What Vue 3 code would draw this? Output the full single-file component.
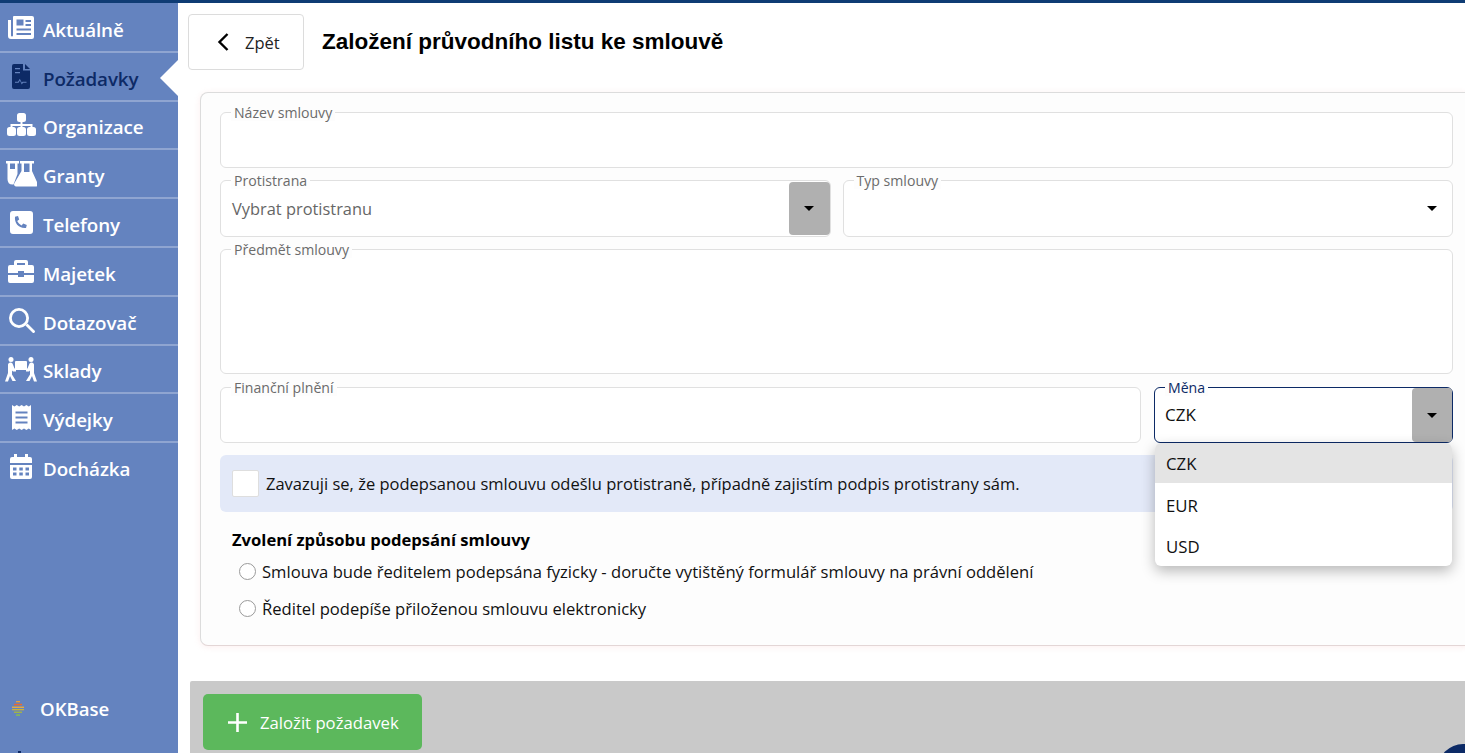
<template>
  <div class="page">
    <div class="top-line"></div>
    <div class="layout">
      <aside class="sidebar">
        <nav class="nav">
          <a
            v-for="item in navItems"
            :key="item.label"
            class="nav-item"
            :class="{ active: item.active }"
          >
            <svg class="nav-icon" viewBox="0 0 32 26" width="32" height="26">
              <path v-for="(d, i) in item.paths" :key="i" :d="d" fill-rule="evenodd" />
            </svg>
            <span class="nav-label">{{ item.label }}</span>
          </a>
        </nav>
        <div class="brand">
          <svg class="brand-logo" viewBox="0 0 14 15" width="14" height="15">
            <rect x="5" y="0" width="4" height="1.3" fill="#f0a030" />
            <rect x="3" y="2.8" width="8" height="1.5" fill="#ee6a2c" />
            <rect x="1" y="5.6" width="12" height="1.3" fill="#f2b134" />
            <rect x="1" y="8" width="12" height="1.3" fill="#c9b23a" />
            <rect x="3" y="10.600" width="8" height="1.3" fill="#a8b83c" />
            <rect x="5" y="13.400" width="4" height="1.3" fill="#8cc63f" />
          </svg>
          <span>OKBase</span>
        </div>
        <i class="peek"></i>
      </aside>

      <main class="content">
        <header class="head">
          <button class="back-btn">
            <svg viewBox="0 0 12 18" width="12" height="18">
              <path d="M10.500 1 2.500 9l8 8" fill="none" stroke="#000" stroke-width="2.400" />
            </svg>
            <span>Zpět</span>
          </button>
          <h1>Založení průvodního listu ke smlouvě</h1>
        </header>

        <section class="card">
          <div class="field">
            <label>Název smlouvy</label>
          </div>

          <div class="row row-half">
            <div class="field">
              <label>Protistrana</label>
              <span class="placeholder">Vybrat protistranu</span>
              <span class="caret-btn"><i class="caret"></i></span>
            </div>
            <div class="field">
              <label>Typ smlouvy</label>
              <span class="caret-plain"><i class="caret"></i></span>
            </div>
          </div>

          <div class="field field-tall">
            <label>Předmět smlouvy</label>
          </div>

          <div class="row row-money">
            <div class="field">
              <label>Finanční plnění</label>
            </div>
            <div class="field field-open">
              <label>Měna</label>
              <span class="value">CZK</span>
              <span class="caret-btn"><i class="caret"></i></span>
              <ul class="menu">
                <li
                  v-for="c in currencies"
                  :key="c"
                  :class="{ selected: c === currency }"
                >{{ c }}</li>
              </ul>
            </div>
          </div>

          <div class="notice">
            <span class="check"></span>
            <span>Zavazuji se, že podepsanou smlouvu odešlu protistraně, případně zajistím podpis protistrany sám.</span>
          </div>

          <h2>Zvolení způsobu podepsání smlouvy</h2>
          <div class="radio-row" v-for="r in signOptions" :key="r">
            <span class="radio"></span>
            <span>{{ r }}</span>
          </div>
        </section>

        <footer class="actions">
          <button class="create-btn">
            <svg viewBox="0 0 19 19" width="19" height="19">
              <path d="M8.200 0h2.600v8.200H19v2.600h-8.200V19H8.200v-8.200H0V8.200h8.200z" fill="#fff" />
            </svg>
            <span>Založit požadavek</span>
          </button>
        </footer>
        <div class="fab"></div>
      </main>
    </div>
  </div>
</template>

<script setup>
const currency = 'CZK'
const currencies = ['CZK', 'EUR', 'USD']
const signOptions = [
  'Smlouva bude ředitelem podepsána fyzicky - doručte vytištěný formulář smlouvy na právní oddělení',
  'Ředitel podepíše přiloženou smlouvu elektronicky'
]

const navItems = [
  {
    label: 'Aktuálně',
    paths: [
      'M9 2h18a2 2 0 0 1 2 2v19a2 2 0 0 1-2 2H6a3 3 0 0 1-3-3V6h3v15.500a1 1 0 0 0 2 0V3a1 1 0 0 1 1-1zM11.500 5.500v6h7v-6zM20.500 6v2h5.500V6zM20.500 10v2h5.500v-2zM11.500 14.500v2h14.500v-2zM11.500 19v2h14.500v-2z'
    ]
  },
  {
    label: 'Požadavky',
    active: true,
    paths: [
      'M9 1h9v6.500h7V24a2 2 0 0 1-2 2H9a2 2 0 0 1-2-2V3a2 2 0 0 1 2-2zM10 5v1.200h5V5zM10 9v1.200h5V9zM10 18.800v.9h3.600l1.300-2.100 1.900 3.800 1.200-1.700h3.500v-.9h-4l-.7.900-2-4-1.800 3.100z',
      'M20 1l5 5h-5z'
    ]
  },
  {
    label: 'Organizace',
    paths: [
      'M14.500 1h4a2.500 2.500 0 0 1 2.500 2.500v4a2.500 2.500 0 0 1-2.500 2.500h-4A2.500 2.500 0 0 1 12 7.500v-4A2.500 2.500 0 0 1 14.500 1z',
      'M15.500 10h2v2h10v3h-2v-1h-8v1h-2v-1h-8v1h-2v-3h10z',
      'M4.500 15h4a2.500 2.500 0 0 1 2.500 2.500v4A2.500 2.500 0 0 1 8.500 24h-4A2.500 2.500 0 0 1 2 21.500v-4A2.500 2.500 0 0 1 4.500 15z',
      'M14.500 15h4a2.500 2.500 0 0 1 2.500 2.500v4a2.500 2.500 0 0 1-2.500 2.500h-4a2.500 2.500 0 0 1-2.500-2.500v-4a2.500 2.500 0 0 1 2.500-2.500z',
      'M24.500 15h4a2.500 2.500 0 0 1 2.500 2.500v4a2.500 2.500 0 0 1-2.500 2.500h-4a2.500 2.500 0 0 1-2.500-2.500v-4a2.500 2.500 0 0 1 2.500-2.500z'
    ]
  },
  {
    label: 'Granty',
    paths: [
      'M1 0h13v2.500h-1.500V13l-4 10.500Q2.500 24 2.500 18V2.500H1zM5 2.500V8h5V2.500z',
      'M15 0h14v2.500h-2V10l5.500 12a2.200 2.200 0 0 1-2 3.500H11.500a2.200 2.200 0 0 1-2-3.500L16.500 10V2.500H15zM19 2.500V11h5.500V2.500z'
    ]
  },
  {
    label: 'Telefony',
    paths: [
      'M8 1h17a3 3 0 0 1 3 3v17a3 3 0 0 1-3 3H8a3 3 0 0 1-3-3V4a3 3 0 0 1 3-3zM13 6l-3 .8c-.8 6.500 4 12 11 11.200l.8-3-3.600-1.500-1.600 2c-2-1-3.500-2.500-4.400-4.400l2-1.600z'
    ]
  },
  {
    label: 'Majetek',
    paths: [
      'M11 2h10a2 2 0 0 1 2 2v3h4a2 2 0 0 1 2 2v6H19v-2h-6v2H3V9a2 2 0 0 1 2-2h4V4a2 2 0 0 1 2-2zM12 5v2h8V5z',
      'M3 17h10v2h6v-2h10v6a2 2 0 0 1-2 2H5a2 2 0 0 1-2-2z'
    ]
  },
  {
    label: 'Dotazovač',
    paths: [
      'M14 1a10 10 0 1 1 0 20a10 10 0 0 1 0-20zM14 3.800a7.200 7.200 0 1 0 0 14.400a7.200 7.200 0 0 0 0-14.400z',
      'M20.500 18.500l2-2 7 7a1.400 1.400 0 0 1-2 2z'
    ]
  },
  {
    label: 'Sklady',
    paths: [
      'M6 1a2.500 2.500 0 1 1 0 5a2.500 2.500 0 0 1 0-5z',
      'M26 1a2.500 2.500 0 1 1 0 5a2.500 2.500 0 0 1 0-5z',
      'M11 5h10a1 1 0 0 1 1 1v7a1 1 0 0 1-1 1H11a1 1 0 0 1-1-1V6a1 1 0 0 1 1-1z',
      'M3 8.500a2.500 2.500 0 0 1 4.500-1l2 5H11v3H8l-1-1v4l4 6.500H7.500L5 20l-2 5.500H0l3-8.500z',
      'M29 8.500a2.500 2.500 0 0 0-4.500-1l-2 5H21v3h3l1-1v4l-4 6.500h3.500L27 20l2 5.500h3l-3-8.500z'
    ]
  },
  {
    label: 'Výdejky',
    paths: [
      'M7 0l2.400 1.500L11.800 0l2.400 1.500L16.600 0 19 1.500 21.400 0l2.400 1.500L26 0v25l-2.200-1.500-2.400 1.500-2.400-1.500-2.400 1.500-2.400-1.500-2.400 1.500-2.400-1.500L7 25zM10.500 6.500v2h12v-2zM10.500 11.500v2h12v-2zM10.500 16.500v2h12v-2z'
    ]
  },
  {
    label: 'Docházka',
    paths: [
      'M7 3h2V0h3v3h8V0h3v3h2a2 2 0 0 1 2 2v4H5V5a2 2 0 0 1 2-2z',
      'M5 11h22v12a2 2 0 0 1-2 2H7a2 2 0 0 1-2-2zM8 13.500v3h3.500v-3zM14.300 13.500v3h3.500v-3zM20.500 13.500v3H24v-3zM8 18.500v3h3.500v-3zM14.300 18.500v3h3.500v-3zM20.500 18.500v3H24v-3z'
    ]
  }
]
</script>

<style>
html,
body {
  margin: 0;
  background: #fff;
  overflow: hidden;
}
</style>

<style scoped>
.page {
  height: 753px;
  display: flex;
  flex-direction: column;
  overflow: hidden;
  font-family: "Open Sans", "Liberation Sans", sans-serif;
  color: #111;
}

.top-line {
  height: 3px;
  flex: none;
  background: #0f3c74;
}

.layout {
  flex: 1;
  display: flex;
  min-height: 0;
}

.sidebar {
  position: relative;
  width: 178px;
  flex: none;
  background: #6483bf;
  display: flex;
  flex-direction: column;
}

.nav {
  padding-top: 1px;
}

.nav-item {
  position: relative;
  height: 46.8px;
  margin-bottom: 2px;
  box-shadow: 0 2px 0 rgba(255, 255, 255, 0.28);
  display: flex;
  align-items: center;
  padding-left: 5px;
  gap: 6px;
  color: #fff;
  font-size: 18.8px;
  font-weight: 600;
  letter-spacing: -0.1px;
}

.nav-label {
  padding-top: 5px;
}

.nav-item:last-child {
  box-shadow: none;
}

.nav-icon {
  flex: none;
  fill: currentColor;
}

.nav-item.active {
  color: #0d2a66;
}

.nav-item.active::after {
  content: "";
  position: absolute;
  right: 0;
  top: 7px;
  border-style: solid;
  border-width: 18px 18px 18px 0;
  border-color: transparent #fff transparent transparent;
}

.brand {
  margin-top: auto;
  margin-bottom: 32px;
  padding-left: 11px;
  display: flex;
  align-items: center;
  gap: 15px;
  color: #fff;
  font-size: 18.6px;
  font-weight: 600;
}

.brand-logo {
  flex: none;
}

.peek {
  position: absolute;
  left: 18px;
  bottom: 0;
  width: 3px;
  height: 2px;
  background: #0d2a66;
}

.content {
  position: relative;
  flex: 1;
  min-width: 0;
  display: flex;
  flex-direction: column;
}

.head {
  display: flex;
  align-items: center;
  gap: 18px;
  margin: 11px 0 22px 10px;
}

.back-btn {
  width: 116px;
  height: 56px;
  padding: 0 0 0 28px;
  display: flex;
  align-items: center;
  gap: 16px;
  background: #fff;
  border: 1px solid #dcdcdc;
  border-radius: 4px;
  font: inherit;
  font-size: 16.5px;
  color: #222;
}

.head h1 {
  margin: 0;
  font-family: "Liberation Sans", sans-serif;
  font-size: 22.5px;
  font-weight: 700;
  color: #000;
}

.card {
  margin: 0 -8px 0 22px;
  padding: 19px 19px 0;
  height: 554px;
  box-sizing: border-box;
  background: #fdfdfd;
  border: 1px solid #dcdcdc;
  border-bottom-color: #e3d6d6;
  border-radius: 8px;
  box-shadow: 0 1px 6px rgba(240, 170, 170, 0.2);
}

.field {
  position: relative;
  height: 56px;
  box-sizing: border-box;
  border: 1px solid #e0e0e0;
  border-radius: 6px;
  background: #fff;
}

.field label {
  position: absolute;
  left: 10px;
  top: -8px;
  padding: 0 3px;
  background: #fdfdfd;
  font-size: 14.1px;
  line-height: 16px;
  color: #6b6b6b;
}

.row {
  display: grid;
  column-gap: 12px;
  margin-top: 12px;
}

.row-half {
  grid-template-columns: 1fr 1fr;
}

.row-half .field {
  height: 57px;
}

.row-money {
  grid-template-columns: 1fr 299px;
  column-gap: 13px;
  margin-top: 13px;
}

.field-tall {
  height: 125px;
  margin-top: 12px;
}

.placeholder,
.value {
  position: absolute;
  left: 11px;
  top: 15px;
  font-size: 16.4px;
  line-height: 26px;
  color: #666;
}

.value {
  left: 10px;
  top: 14px;
  font-size: 17px;
  color: #111;
}

.caret-btn {
  position: absolute;
  right: 0;
  top: 1px;
  bottom: 1px;
  width: 41px;
  border-radius: 4px;
  background: #b0b0b0;
  display: flex;
  align-items: center;
  justify-content: center;
}

.caret-plain {
  position: absolute;
  right: 0;
  top: 0;
  bottom: 0;
  width: 41px;
  display: flex;
  align-items: center;
  justify-content: center;
}

.caret {
  display: block;
  border-style: solid;
  border-width: 5px 5px 0;
  border-color: #000 transparent transparent;
}

.field-open {
  border-color: #0c2a66;
}

.field-open label {
  color: #0c2a66;
}

.field-open .caret-btn {
  top: 0;
  bottom: 0;
  width: 40px;
}

.menu {
  position: absolute;
  left: 0;
  right: 0;
  top: 55px;
  z-index: 5;
  margin: 0;
  padding: 0;
  list-style: none;
  background: #fff;
  border-radius: 6px;
  overflow: hidden;
  box-shadow: 0 5px 14px rgba(0, 0, 0, 0.28);
}

.menu li {
  height: 41.5px;
  box-sizing: border-box;
  padding: 3px 0 0 11px;
  display: flex;
  align-items: center;
  font-size: 16.8px;
  color: #111;
}

.menu li.selected {
  height: 40px;
  padding-top: 0;
  background: #e4e4e4;
}

.notice {
  margin-top: 12px;
  height: 57px;
  padding-left: 12px;
  display: flex;
  align-items: center;
  gap: 7px;
  background: #e3e9f8;
  border-radius: 6px;
  font-size: 16.5px;
  color: #111;
}

.check {
  width: 27px;
  height: 27px;
  flex: none;
  box-sizing: border-box;
  background: #fff;
  border: 1px solid #dedede;
  border-radius: 2px;
}

.card h2 {
  margin: 17px 0 2px 12px;
  font-size: 16.6px;
  line-height: 22px;
  font-weight: 700;
  color: #000;
}

.radio-row {
  height: 37px;
  padding-left: 19px;
  display: flex;
  align-items: center;
  gap: 6px;
  font-size: 16.6px;
  color: #111;
}

.radio {
  width: 17px;
  height: 17px;
  flex: none;
  box-sizing: border-box;
  border: 1.5px solid #9a9a9a;
  border-radius: 50%;
  background: #fff;
}

.actions {
  flex: 1;
  margin: 35px 0 0 12px;
  padding: 13px 13px 0;
  background: #c9c9c9;
  border-radius: 2px 0 0 0;
}

.create-btn {
  width: 219px;
  height: 56px;
  padding: 0 0 0 25px;
  display: flex;
  align-items: center;
  gap: 13px;
  background: #5cb85c;
  border: none;
  border-radius: 5px;
  font: inherit;
  font-size: 16.7px;
  color: #fff;
}

.fab {
  position: absolute;
  right: -23px;
  bottom: -41px;
  width: 50px;
  height: 50px;
  border-radius: 50%;
  background: #0c2a66;
}
</style>
